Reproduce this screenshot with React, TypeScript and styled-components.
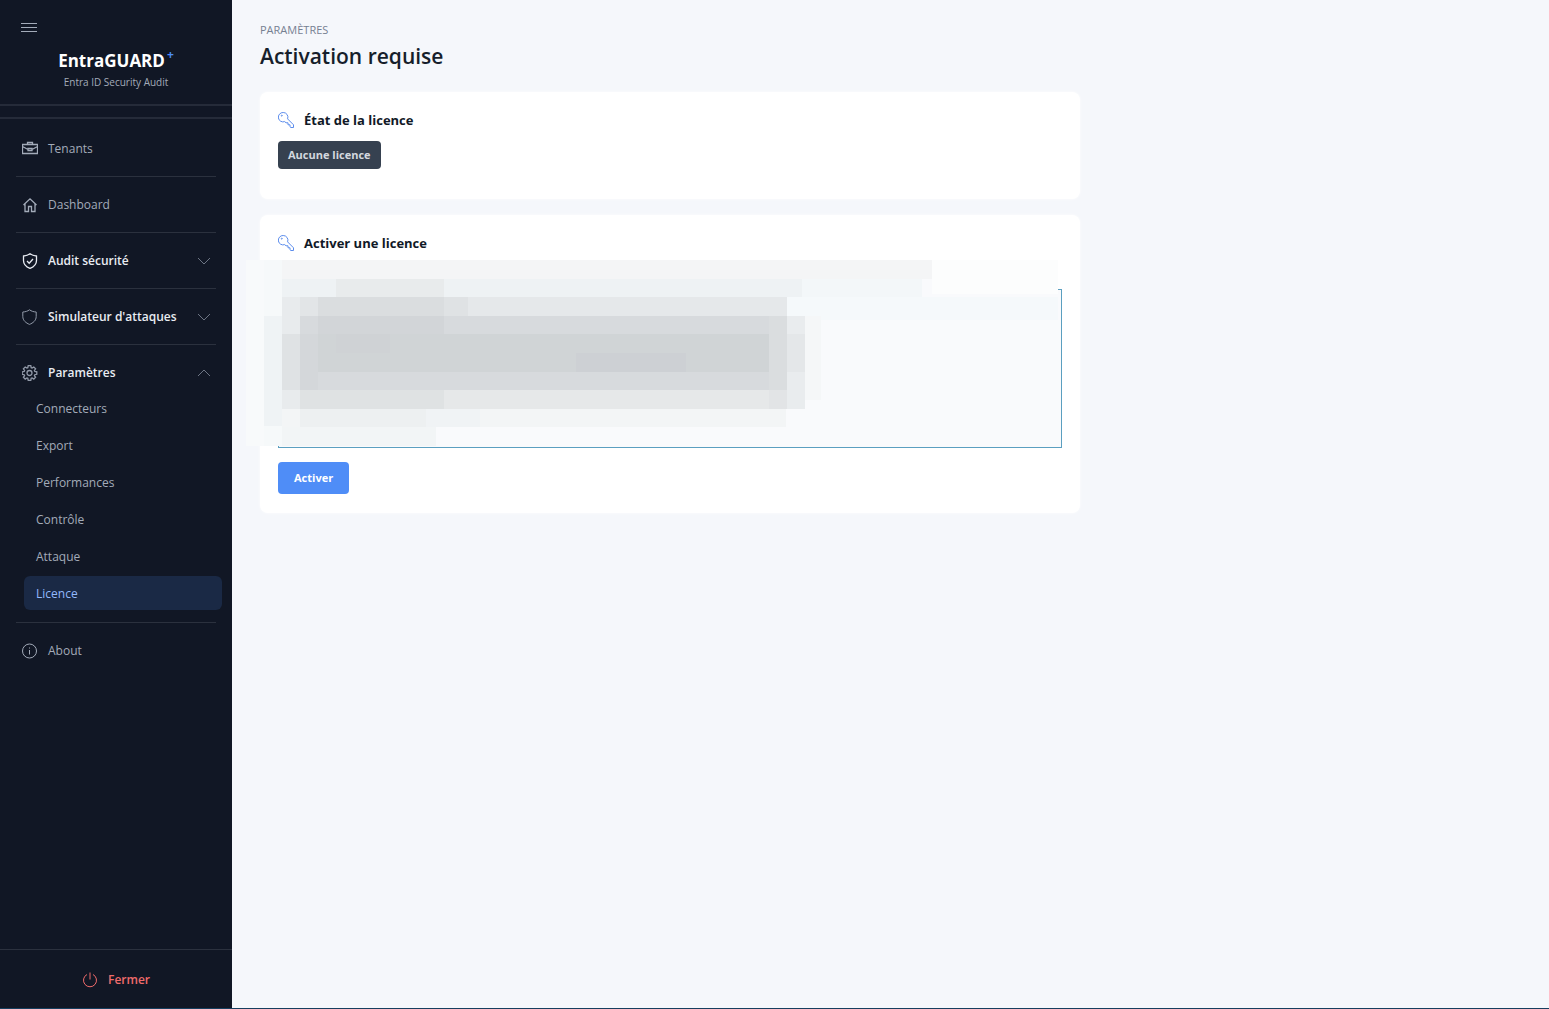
import React, { useState } from "react";
import styled, { createGlobalStyle, css } from "styled-components";

const Global = createGlobalStyle`
  *, *::before, *::after { box-sizing: border-box; }
  body {
    margin: 0;
    background: #f5f7fb;
    font-family: "Segoe UI", "Open Sans", "Noto Sans", sans-serif;
    font-size: 12px;
    line-height: 20px;
  }
  button, textarea { font: inherit; }
`;

const Shell = styled.div`
  display: grid;
  grid-template-columns: 232px minmax(0, 1fr);
  min-height: 100vh;
  border-bottom: 1px solid #173f5f;
`;

const Sidebar = styled.aside`
  display: flex;
  flex-direction: column;
  background: #111725;
  color: #a3abb9;
`;

const MenuButton = styled.button`
  display: flex;
  align-self: flex-start;
  margin: 20px 0 0 21px;
  padding: 0;
  border: 0;
  background: none;
  color: #a3abb9;
  cursor: pointer;
`;

const Brand = styled.div`
  display: flex;
  flex-direction: column;
  align-items: center;
  padding: 12px 0 14px;
  border-bottom: 2px solid #252b39;
`;

const BrandName = styled.div`
  display: flex;
  align-items: flex-start;
  color: #ffffff;
  font-size: 17px;
  font-weight: 700;
  line-height: 26px;
`;

const Plus = styled.sup`
  margin-left: 2px;
  color: #4b8bf5;
  font-size: 12px;
  line-height: 14px;
`;

const Tagline = styled.div`
  font-size: 10px;
  line-height: 16px;
`;

const Nav = styled.nav`
  flex: 1;
  margin-top: 11px;
  padding: 13px 10px 0 16px;
  border-top: 2px solid #252b39;
`;

const Divider = styled.hr`
  margin: 12px 6px 11px 0;
  border: 0;
  border-top: 1px solid #2b313e;
`;

const rowStyle = css`
  display: flex;
  align-items: center;
  gap: 10px;
  width: 100%;
  height: 32px;
  padding: 1px 10px 0 6px;
  border: 0;
  background: none;
  text-align: left;
  text-decoration: none;
  cursor: pointer;
`;

const NavLink = styled.a`
  ${rowStyle}
  color: #a3abb9;
`;

const NavGroup = styled.button<{ $bright?: boolean }>`
  ${rowStyle}
  color: #e9ecf2;
  font-weight: 600;
  svg { color: ${(p) => (p.$bright ? "#e9ecf2" : "#929aa9")}; }
  svg:last-child { margin-left: auto; color: #6d7584; }
`;

const SubList = styled.div`
  display: flex;
  flex-direction: column;
  gap: 3px;
  margin: 3px 0 0 8px;
`;

const SubLink = styled.a<{ $active?: boolean }>`
  display: flex;
  align-items: center;
  height: 34px;
  padding: 2px 12px 0;
  border-radius: 6px;
  background: ${(p) => (p.$active ? "#1a2945" : "transparent")};
  color: ${(p) => (p.$active ? "#93b8fc" : "#a3abb9")};
  text-decoration: none;
`;

const Footer = styled.div`
  display: flex;
  justify-content: center;
  padding: 17px 0;
  border-top: 1px solid #2b313e;
`;

const CloseButton = styled.button`
  display: flex;
  align-items: center;
  gap: 10px;
  padding: 3px 0 1px;
  border: 0;
  background: none;
  color: #ef6b6b;
  font-weight: 600;
  cursor: pointer;
`;

const Main = styled.main`
  padding: 22px 28px;
`;

const Eyebrow = styled.div`
  color: #758092;
  font-size: 11px;
  line-height: 16px;
  text-transform: uppercase;
`;

const Title = styled.h1`
  margin: 2px 0 20px;
  color: #161e2b;
  font-size: 21px;
  font-weight: 600;
  line-height: 32px;
`;

const Cards = styled.div`
  display: flex;
  flex-direction: column;
  gap: 16px;
  max-width: 820px;
`;

const Card = styled.section`
  padding: 18px 18px 19px;
  border-radius: 8px;
  background: #ffffff;
  box-shadow: 0 0 3px rgba(255, 255, 255, 0.9);
`;

const CardTitle = styled.h2`
  display: flex;
  align-items: center;
  gap: 10px;
  margin: 0;
  color: #111927;
  font-size: 13px;
  font-weight: 700;
  line-height: 20px;
  svg { color: #5b8cec; }
`;

const Badge = styled.span`
  display: block;
  width: fit-content;
  margin: 11px 0;
  padding: 4px 10px;
  border-radius: 4px;
  background: #364150;
  color: #d3d8df;
  font-size: 11px;
  font-weight: 700;
`;

const Field = styled.div`
  position: relative;
  display: flex;
  margin: 36px 0 14px;
`;

const KeyInput = styled.textarea`
  width: 100%;
  height: 159px;
  padding: 10px;
  border: 1px solid #5b9fc0;
  border-radius: 0;
  background: #f9fafc;
  outline: 0;
  resize: none;
`;

const Mosaic = styled.svg`
  position: absolute;
  top: -29px;
  left: -32px;
  width: calc(100% + 28px);
  height: 186px;
  pointer-events: none;
`;

const Submit = styled.button`
  display: block;
  height: 32px;
  padding: 0 16px;
  border: 0;
  border-radius: 4px;
  background: #4f8df7;
  color: #ffffff;
  font-size: 11px;
  font-weight: 700;
  cursor: pointer;
`;

const paths = {
  menu: "M0 3.5h16M0 7.5h16M0 11.5h16",
  case: "M.5 3.500h15v9H.5zM5.500 3.500v-2h5v2M.5 5.500l5.500 3M15.500 5.500l-5.500 3M6 7.500h4v2H6z",
  home: "M1.5 8 8 1.8 14.500 8M3 7v7.500h3.500v-5h3v5H13V7",
  shieldCheck: "M8 .8C6 2.300 4 2.800 1.500 3v4.500c0 4 3 6.500 6.500 7.900 3.500-1.400 6.500-3.900 6.500-7.900V3C12 2.800 10 2.300 8 .8ZM5 8l2.200 2.200L11 6",
  shield: "M7.500 .8C5.500 2.300 3.500 2.800 .8 3v4.500c0 4 3.200 6.500 6.700 7.900 3.500-1.400 6.700-3.900 6.700-7.900V3C11.500 2.800 9.500 2.300 7.500 .8Z",
  info: "M7.500 1a7 7 0 1 0 0 14A7 7 0 0 0 7.500 1ZM7.500 7v4.500M7.500 4.500v1",
  power: "M5 2.500a6.500 6.500 0 1 0 6 0M8 .5v7",
  key: "M5.200.5a4.700 4.700 0 1 0 1.500 9.100L8 10.800h2v2h2v2l.800.700h2.700v-2.700L9.600 6.900A4.700 4.700 0 0 0 5.200.5ZM3.700 3.200a.5.5 0 1 0 .1 0",
  down: "M2 5l6 6 6-6",
  up: "M2 11l6-6 6 6",
  gear: "M7.500 5.500a2.500 2.500 0 1 0 0 5 2.500 2.500 0 0 0 0-5ZM6.200.7h2.600l.4 2 .9.4L11.800 2l1.800 1.800-1.200 1.700.4.900 2 .4v2.500l-2 .4-.4.900 1.200 1.700-1.800 1.800-1.700-1.200-.9.400-.4 2H6.200l-.4-2-.9-.4-1.700 1.200-1.800-1.800 1.200-1.700-.4-.9-2-.4V6.800l2-.4.400-.9-1.200-1.700L3.200 2l1.700 1.100.9-.4Z",
};

const heavy = ["shieldCheck", "home", "case", "gear"];

function Icon({ name }: { name: keyof typeof paths }) {
  return (
    <svg
      width="16"
      height="16"
      viewBox="0 0 16 16"
      fill="none"
      stroke="currentColor"
      strokeWidth={heavy.includes(name) ? 1.3 : 1}
      aria-hidden="true"
    >
      <path d={paths[name]} />
    </svg>
  );
}

/* x, y, width, height, colour */
const tiles: [number, number, number, number, string][] = [
  [0, 0, 812, 186, "#f9fafc"],
  [0, 0, 18, 186, "#f8fafb"],
  [18, 0, 18, 186, "#f6f9fa"],
  [18, 56, 18, 110, "#eff3f5"],
  [36, 0, 650, 19, "#f4f5f6"],
  [686, 0, 126, 34, "#fcfdfd"],
  [36, 19, 520, 18, "#eef2f4"],
  [556, 19, 120, 18, "#f3f7f9"],
  [541, 37, 271, 23, "#f5f9fb"],
  [90, 19, 108, 18, "#e8ebec"],
  [36, 37, 18, 112, "#e8ebed"],
  [36, 74, 18, 56, "#dfe2e4"],
  [54, 37, 18, 19, "#e2e5e7"],
  [72, 37, 469, 19, "#e5e8ea"],
  [72, 37, 126, 19, "#dadddf"],
  [198, 37, 24, 19, "#dfe2e4"],
  [54, 56, 487, 93, "#d7dadd"],
  [72, 56, 126, 18, "#d2d5d8"],
  [54, 74, 469, 38, "#d0d4d6"],
  [54, 74, 18, 56, "#d4d7da"],
  [90, 74, 54, 19, "#cfd2d5"],
  [330, 93, 110, 19, "#cdd0d4"],
  [72, 112, 451, 18, "#d7dadd"],
  [523, 56, 18, 74, "#dadddf"],
  [541, 56, 18, 93, "#e9ecee"],
  [541, 74, 18, 38, "#e4e7e9"],
  [559, 56, 16, 84, "#f5f7f8"],
  [54, 130, 487, 19, "#e6e8e9"],
  [54, 130, 144, 19, "#dfe2e3"],
  [523, 130, 18, 19, "#e2e4e6"],
  [36, 149, 504, 18, "#f3f5f6"],
  [54, 149, 126, 18, "#edf0f1"],
  [180, 149, 54, 18, "#f0f3f5"],
  [36, 167, 154, 19, "#f2f5f6"],
];

export default function App() {
  const [key, setKey] = useState("");
  const [open, setOpen] = useState(true);
  const pages = ["Connecteurs", "Export", "Performances", "Contrôle", "Attaque", "Licence"];

  return (
    <>
      <Global />
      <Shell>
        <Sidebar>
          <MenuButton aria-label="Menu"><Icon name="menu" /></MenuButton>
          <Brand>
            <BrandName>EntraGUARD<Plus>+</Plus></BrandName>
            <Tagline>Entra ID Security Audit</Tagline>
          </Brand>
          <Nav>
            <NavLink href="#tenants"><Icon name="case" />Tenants</NavLink>
            <Divider />
            <NavLink href="#dashboard"><Icon name="home" />Dashboard</NavLink>
            <Divider />
            <NavGroup $bright><Icon name="shieldCheck" />Audit sécurité<Icon name="down" /></NavGroup>
            <Divider />
            <NavGroup><Icon name="shield" />Simulateur d'attaques<Icon name="down" /></NavGroup>
            <Divider />
            <NavGroup aria-expanded={open} onClick={() => setOpen(!open)}>
              <Icon name="gear" />Paramètres<Icon name={open ? "up" : "down"} />
            </NavGroup>
            {open && (
              <SubList>
                {pages.map((p) => (
                  <SubLink key={p} href={"#" + p.toLowerCase()} $active={p === "Licence"}>{p}</SubLink>
                ))}
              </SubList>
            )}
            <Divider />
            <NavLink href="#about"><Icon name="info" />About</NavLink>
          </Nav>
          <Footer>
            <CloseButton><Icon name="power" />Fermer</CloseButton>
          </Footer>
        </Sidebar>
        <Main>
          <Eyebrow>Paramètres</Eyebrow>
          <Title>Activation requise</Title>
          <Cards>
            <Card>
              <CardTitle><Icon name="key" />État de la licence</CardTitle>
              <Badge>Aucune licence</Badge>
            </Card>
            <Card>
              <CardTitle id="activate"><Icon name="key" />Activer une licence</CardTitle>
              <Field>
                <KeyInput aria-labelledby="activate" value={key} onChange={(e) => setKey(e.target.value)} />
                <Mosaic viewBox="0 0 812 186" preserveAspectRatio="none" shapeRendering="crispEdges" aria-hidden="true">
                  {tiles.map(([x, y, w, h, c], i) => (
                    <rect key={i} x={x} y={y} width={w} height={h} fill={c} />
                  ))}
                </Mosaic>
              </Field>
              <Submit>Activer</Submit>
            </Card>
          </Cards>
        </Main>
      </Shell>
    </>
  );
}
